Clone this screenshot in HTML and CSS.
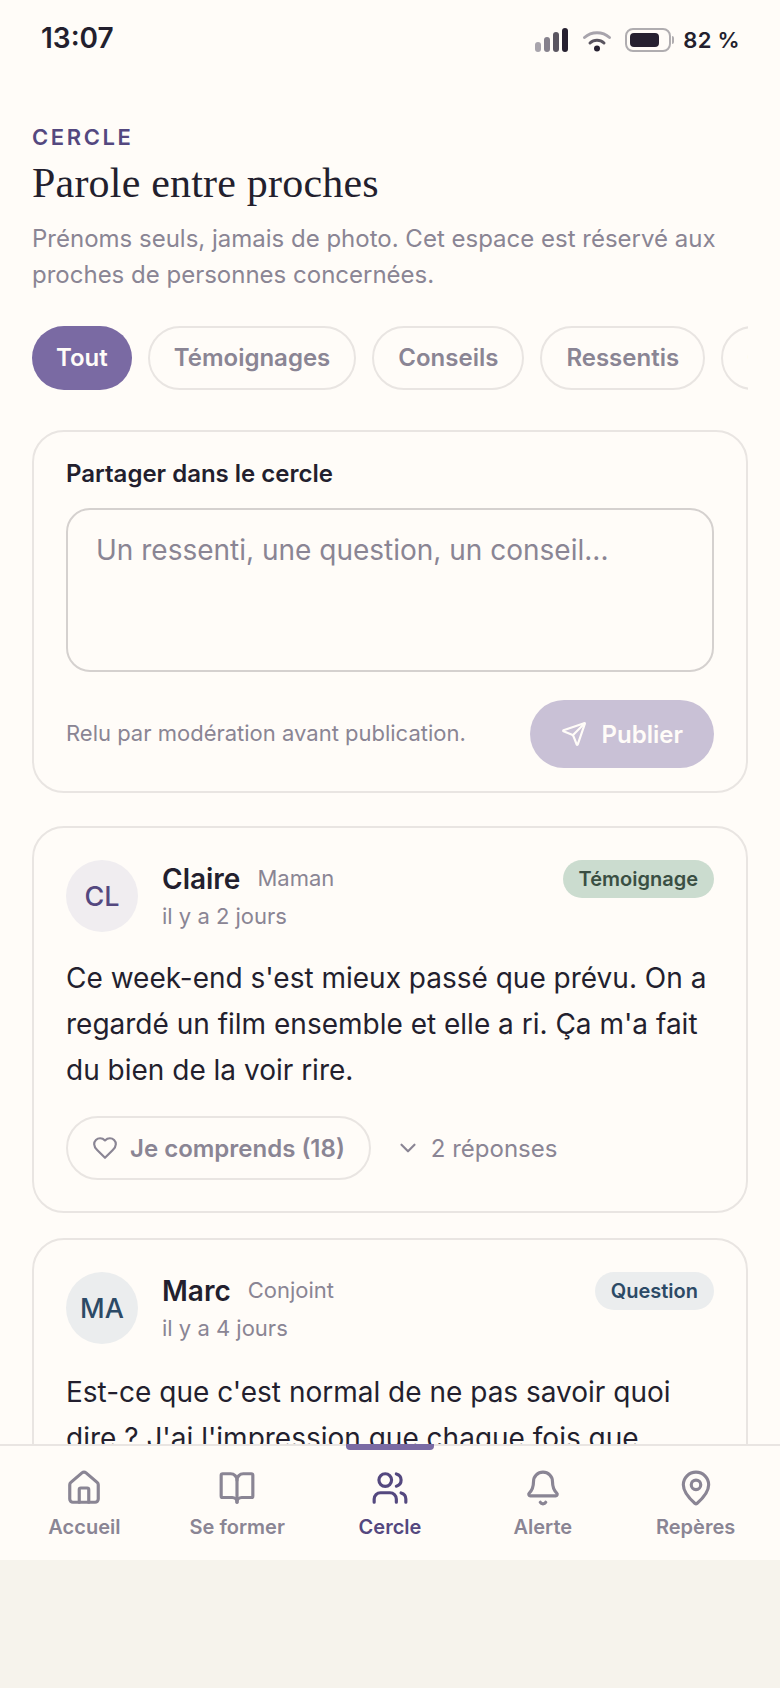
FILE: index.html
```html
<!DOCTYPE html>
<html lang="fr">
<head>
    <meta charset="UTF-8">
    <meta name="viewport" content="width=device-width, initial-scale=1.0">
    <title>Cercle</title>
    <link rel="stylesheet" href="styles.css">
</head>
<body>
    <div class="screen">
        <div class="status-bar">
            <span class="time">13:07</span>
            <div class="status-right">
                <div class="signal">
                    <span class="bar bar-1"></span>
                    <span class="bar bar-2"></span>
                    <span class="bar bar-3"></span>
                    <span class="bar bar-4"></span>
                </div>
                <svg class="wifi" width="30" height="24" viewBox="0 0 30 24" fill="none" stroke-linecap="round">
                    <path d="M2.5 9.5C9.5 3 20.500 3 27.500 9.500" stroke="#a8a4ac" stroke-width="3"/>
                    <path d="M8 15C12 11.200 18 11.200 22 15" stroke="#5a5560" stroke-width="3"/>
                    <circle cx="15" cy="20.500" r="3" fill="#262030"/>
                </svg>
                <div class="battery">
                    <div class="battery-body"><span class="battery-level"></span></div>
                    <span class="battery-tip"></span>
                </div>
                <span class="percent">82 %</span>
            </div>
        </div>

        <main class="content">
            <p class="eyebrow">CERCLE</p>
            <h1>Parole entre proches</h1>
            <p class="intro">Prénoms seuls, jamais de photo. Cet espace est réservé aux proches de personnes concernées.</p>

            <div class="chips">
                <span class="chip chip-active">Tout</span>
                <span class="chip">Témoignages</span>
                <span class="chip">Conseils</span>
                <span class="chip">Ressentis</span>
                <span class="chip">Questions</span>
            </div>

            <section class="card composer">
                <h2>Partager dans le cercle</h2>
                <div class="input">Un ressenti, une question, un conseil...</div>
                <div class="composer-foot">
                    <span class="note">Relu par modération avant publication.</span>
                    <span class="publish">
                        <svg class="icon-sm" viewBox="0 0 24 24"><path d="M14.536 21.686a.5.5 0 0 0 .937-.024l6.5-19a.496.496 0 0 0-.635-.635l-19 6.5a.5.5 0 0 0-.024.937l7.93 3.18a2 2 0 0 1 1.112 1.11z"/><path d="m21.854 2.147-10.94 10.939"/></svg>
                        Publier
                    </span>
                </div>
            </section>

            <article class="card post">
                <div class="post-head">
                    <div class="avatar avatar-plum">CL</div>
                    <div class="who">
                        <div class="who-line"><span class="name">Claire</span><span class="role">Maman</span></div>
                        <div class="when">il y a 2 jours</div>
                    </div>
                    <span class="tag tag-green">Témoignage</span>
                </div>
                <p class="post-text">Ce week-end s'est mieux passé que prévu. On a regardé un film ensemble et elle a ri. Ça m'a fait du bien de la voir rire.</p>
                <div class="post-actions">
                    <span class="like">
                        <svg class="icon-sm" viewBox="0 0 24 24"><path d="M19 14c1.490-1.460 3-3.210 3-5.500A5.500 5.500 0 0 0 16.500 3c-1.760 0-3 .5-4.500 2-1.500-1.500-2.740-2-4.500-2A5.500 5.500 0 0 0 2 8.500c0 2.300 1.500 4.050 3 5.500l7 7Z"/></svg>
                        Je comprends (18)
                    </span>
                    <span class="replies">
                        <svg class="icon-sm" viewBox="0 0 24 24"><path d="m6 9 6 6 6-6"/></svg>
                        2 réponses
                    </span>
                </div>
            </article>

            <article class="card post">
                <div class="post-head">
                    <div class="avatar avatar-blue">MA</div>
                    <div class="who">
                        <div class="who-line"><span class="name">Marc</span><span class="role">Conjoint</span></div>
                        <div class="when">il y a 4 jours</div>
                    </div>
                    <span class="tag tag-blue">Question</span>
                </div>
                <p class="post-text">Est-ce que c'est normal de ne pas savoir quoi dire ? J'ai l'impression que chaque fois que j'essaie de parler, je dis ce qu'il ne faut pas.</p>
            </article>
        </main>

        <nav class="tabbar">
            <span class="tab-marker"></span>
            <a class="tab">
                <svg class="icon" viewBox="0 0 24 24"><path d="M15 21v-8a1 1 0 0 0-1-1h-4a1 1 0 0 0-1 1v8"/><path d="M3 10a2 2 0 0 1 .709-1.528l7-5.999a2 2 0 0 1 2.582 0l7 5.999A2 2 0 0 1 21 10v9a2 2 0 0 1-2 2H5a2 2 0 0 1-2-2z"/></svg>
                Accueil
            </a>
            <a class="tab">
                <svg class="icon" viewBox="0 0 24 24"><path d="M12 7v14"/><path d="M3 18a1 1 0 0 1-1-1V4a1 1 0 0 1 1-1h5a4 4 0 0 1 4 4 4 4 0 0 1 4-4h5a1 1 0 0 1 1 1v13a1 1 0 0 1-1 1h-6a3 3 0 0 0-3 3 3 3 0 0 0-3-3z"/></svg>
                Se former
            </a>
            <a class="tab tab-active">
                <svg class="icon" viewBox="0 0 24 24"><path d="M16 21v-2a4 4 0 0 0-4-4H6a4 4 0 0 0-4 4v2"/><circle cx="9" cy="7" r="4"/><path d="M22 21v-2a4 4 0 0 0-3-3.870"/><path d="M16 3.130a4 4 0 0 1 0 7.750"/></svg>
                Cercle
            </a>
            <a class="tab">
                <svg class="icon" viewBox="0 0 24 24"><path d="M10.268 21a2 2 0 0 0 3.464 0"/><path d="M3.262 15.326A1 1 0 0 0 4 17h16a1 1 0 0 0 .74-1.673C19.410 13.956 18 12.499 18 8A6 6 0 0 0 6 8c0 4.499-1.411 5.956-2.738 7.326"/></svg>
                Alerte
            </a>
            <a class="tab">
                <svg class="icon" viewBox="0 0 24 24"><path d="M20 10c0 4.993-5.539 10.193-7.399 11.799a1 1 0 0 1-1.202 0C9.539 20.193 4 14.993 4 10a8 8 0 0 1 16 0"/><circle cx="12" cy="10" r="3"/></svg>
                Repères
            </a>
        </nav>
    </div>
</body>
</html>
```

FILE: styles.css
```css
* {
    margin: 0;
    padding: 0;
    box-sizing: border-box;
}

body {
    background: #f6f3ec;
    font-family: Inter, "Liberation Sans", sans-serif;
    color: #231f2e;
    overflow: hidden;
}

.screen {
    display: flex;
    flex-direction: column;
    height: 1560px;
    background: #fffcf8;
}

/* status bar */
.status-bar {
    display: flex;
    justify-content: space-between;
    align-items: center;
    height: 76px;
    padding: 0 41px;
    flex-shrink: 0;
}

.time {
    font-size: 28px;
    font-weight: 600;
}

.status-right {
    display: flex;
    align-items: center;
    margin-top: 4px;
    margin-right: -1px;
}

.signal {
    display: flex;
    align-items: flex-end;
    gap: 3px;
    height: 24px;
    margin-right: 14px;
}

.bar {
    width: 6px;
    border-radius: 3px;
}

.bar-1 { height: 10px; background: #a8a4ac; }
.bar-2 { height: 15px; background: #86818c; }
.bar-3 { height: 20px; background: #5a5560; }
.bar-4 { height: 24px; background: #262030; }

.wifi {
    margin-right: 13px;
}

.battery {
    display: flex;
    align-items: center;
    gap: 1px;
    margin-right: 9px;
}

.battery-body {
    width: 46px;
    height: 24px;
    padding: 3px;
    border: 2px solid #b0adb0;
    border-radius: 8px;
}

.battery-level {
    display: block;
    width: 29px;
    height: 100%;
    background: #262030;
    border-radius: 4px;
}

.battery-tip {
    width: 2px;
    height: 8px;
    background: #b0adb0;
    border-radius: 0 2px 2px 0;
}

.percent {
    font-size: 22px;
    font-weight: 600;
    letter-spacing: 0.3px;
}

/* main column */
.content {
    flex: 1;
    overflow: hidden;
    padding: 49px 32px 0;
}

.eyebrow {
    font-size: 22px;
    line-height: 24px;
    font-weight: 600;
    letter-spacing: 2.6px;
    color: #54487f;
}

h1 {
    font-family: "Liberation Serif", serif;
    font-size: 42px;
    line-height: 48px;
    font-weight: 400;
    letter-spacing: 0.2px;
    margin-top: 10px;
}

.intro {
    font-size: 24px;
    line-height: 36px;
    color: #8a8594;
    margin-top: 14px;
}

.chips {
    display: flex;
    gap: 16px;
    margin-top: 33px;
    overflow: hidden;
}

.chip {
    flex-shrink: 0;
    height: 64px;
    line-height: 60px;
    padding: 0 24px;
    border: 2px solid #e9e5e2;
    border-radius: 32px;
    font-size: 24px;
    font-weight: 600;
    color: #8a8594;
}

.chip-active {
    line-height: 64px;
    border: none;
    background: #7a6aa3;
    color: #fffcf8;
}

.card {
    border: 2px solid #e9e5e2;
    border-radius: 32px;
    padding: 32px;
}

.composer {
    margin-top: 40px;
    padding-top: 28px;
    padding-bottom: 23px;
}

h2 {
    font-size: 24px;
    line-height: 28px;
    font-weight: 600;
}

.input {
    height: 164px;
    margin-top: 20px;
    padding: 20px 28px;
    border: 2px solid #d5d1cf;
    border-radius: 24px;
    font-size: 28px;
    line-height: 40px;
    color: #8a8594;
}

.composer-foot {
    display: flex;
    justify-content: space-between;
    align-items: center;
    margin-top: 28px;
}

.note {
    font-size: 22px;
    color: #8a8594;
    margin-bottom: 2px;
}

.publish {
    display: flex;
    align-items: center;
    gap: 15px;
    height: 68px;
    padding: 0 31px;
    border-radius: 34px;
    background: #c9c1d6;
    color: #fffcf8;
    font-size: 24px;
    font-weight: 600;
}

.icon-sm {
    width: 26px;
    height: 26px;
    fill: none;
    stroke: currentColor;
    stroke-width: 2;
    stroke-linecap: round;
    stroke-linejoin: round;
    flex-shrink: 0;
}

/* posts */
.post {
    margin-top: 33px;
    padding-bottom: 31px;
}

.post + .post {
    margin-top: 25px;
}

.post-head {
    display: flex;
    align-items: flex-start;
}

.avatar {
    width: 72px;
    height: 72px;
    border-radius: 50%;
    display: flex;
    align-items: center;
    justify-content: center;
    font-size: 27px;
    font-weight: 500;
    flex-shrink: 0;
}

.avatar-plum { background: #f0edf0; color: #54487f; }
.avatar-blue { background: #ebedee; color: #2c4a66; }

.who {
    flex: 1;
    margin-left: 24px;
}

.who-line {
    display: flex;
    align-items: center;
    gap: 17px;
}

.name {
    font-size: 28px;
    line-height: 39px;
    font-weight: 600;
}

.role {
    font-size: 22px;
    color: #8a8594;
    margin-bottom: 3px;
}

.when {
    font-size: 22px;
    line-height: 34px;
    color: #8a8594;
}

.tag {
    height: 38px;
    line-height: 38px;
    padding: 0 16px;
    border-radius: 19px;
    font-size: 20px;
    font-weight: 600;
}

.tag-green { background: #cbdccf; color: #3a4f43; }
.tag-blue { background: #ebedee; color: #2c4a66; }

.post-text {
    margin-top: 22px;
    font-size: 28px;
    line-height: 46px;
}

.post + .post .post-text {
    margin-top: 24px;
}

.post-actions {
    display: flex;
    align-items: center;
    margin-top: 23px;
}

.like {
    display: flex;
    align-items: center;
    gap: 12px;
    height: 64px;
    padding: 0 24px;
    border: 2px solid #e9e5e2;
    border-radius: 32px;
    font-size: 24px;
    font-weight: 600;
    color: #8a8594;
}

.replies {
    display: flex;
    align-items: center;
    gap: 10px;
    margin-left: 24px;
    font-size: 24px;
    color: #8a8594;
}

/* bottom nav */
.tabbar {
    position: relative;
    display: flex;
    flex-shrink: 0;
    height: 116px;
    padding: 23px 8px 0;
    background: #fffcf8;
    border-top: 2px solid #e9e5e2;
}

.tab-marker {
    position: absolute;
    top: -2px;
    left: 346px;
    width: 88px;
    height: 6px;
    background: #7a6aa3;
    border-radius: 0 0 4px 4px;
}

.tab {
    flex: 1;
    display: flex;
    flex-direction: column;
    align-items: center;
    gap: 8px;
    font-size: 20px;
    line-height: 24px;
    font-weight: 600;
    color: #8a8594;
}

.tab-active {
    color: #54487f;
}

.icon {
    width: 38px;
    height: 38px;
    fill: none;
    stroke: currentColor;
    stroke-width: 2;
    stroke-linecap: round;
    stroke-linejoin: round;
}
```
